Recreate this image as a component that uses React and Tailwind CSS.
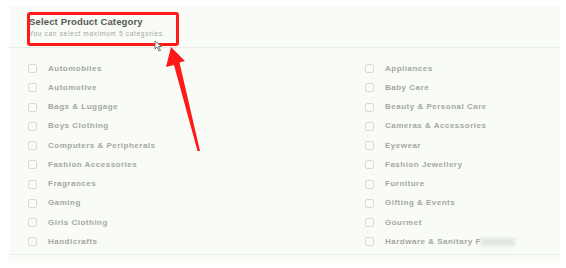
import React from "react";

const left = [
  "Automobiles",
  "Automotive",
  "Bags & Luggage",
  "Boys Clothing",
  "Computers & Peripherals",
  "Fashion Accessories",
  "Fragrances",
  "Gaming",
  "Girls Clothing",
  "Handicrafts",
];

const right = [
  "Appliances",
  "Baby Care",
  "Beauty & Personal Care",
  "Cameras & Accessories",
  "Eyewear",
  "Fashion Jewellery",
  "Furniture",
  "Gifting & Events",
  "Gourmet",
  "Hardware & Sanitary F",
];

const Row = ({ label, smudge }) => (
  <label className="flex items-center h-[19.25px] gap-[11px]">
    <span className="w-[9px] h-[9px] rounded-[2px] border border-[#d6dbd4] bg-[#fbfcfa]" />
    <span className="text-[8px] font-semibold tracking-[0.5px] text-[#a4a8a4] whitespace-nowrap">
      {label}
    </span>
    {smudge && (
      <span className="-ml-[11px] w-[34px] h-[8px] bg-[#e3e6e2] blur-[1.5px]" />
    )}
  </label>
);

const App = () => {
  return (
    <div
      className="relative w-[566px] h-[268px] bg-white overflow-hidden"
      style={{ fontFamily: '"Liberation Sans", Arial, sans-serif' }}
    >
      <div className="ml-[9px] mt-[6px] w-[551px] h-[255px] bg-[#f8fbf6] flex flex-col">
        <div className="h-[42px] border-b border-[#e9ede7] pl-[20px] pt-[10px]">
          <h3 className="text-[9.5px] font-bold tracking-[0.15px] text-[#555955] leading-[12px]">
            Select Product Category
          </h3>
          <p className="text-[6.5px] tracking-[0.7px] text-[#a2a6a2] leading-[10px] mt-[1px]">
            You can select maximum 5 categories.
          </p>
        </div>
        <div className="grid grid-cols-[337px_1fr] pl-[19px] pt-[11px] pb-[2px] border-b border-[#e9ede7]">
          <div className="flex flex-col">
            {left.map((c) => (
              <Row key={c} label={c} />
            ))}
          </div>
          <div className="flex flex-col">
            {right.map((c, i) => (
              <Row key={c} label={c} smudge={i === right.length - 1} />
            ))}
          </div>
        </div>
      </div>

      {/* annotation box */}
      <div className="absolute left-[27px] top-[12px] w-[152px] h-[34px] border-[3px] border-[#ff1a1a] rounded-[3px]" />

      {/* cursor */}
      <svg className="absolute left-[153px] top-[40px]" width="12" height="12" viewBox="0 0 12 12">
        <path d="M2 1 L2 9 L4 7 L6 11 L7.5 10.3 L5.5 6.5 L8.5 6.5 Z" fill="#fff" stroke="#555" strokeWidth="0.8" />
      </svg>

      {/* arrow */}
      <svg className="absolute left-0 top-0" width="566" height="268" viewBox="0 0 566 268">
        <polygon points="171,47 185,61 179.5,62.5 200,151 197.5,151 174,65 166,67" fill="#ff1a1a" />
      </svg>
    </div>
  );
};

export default App;
